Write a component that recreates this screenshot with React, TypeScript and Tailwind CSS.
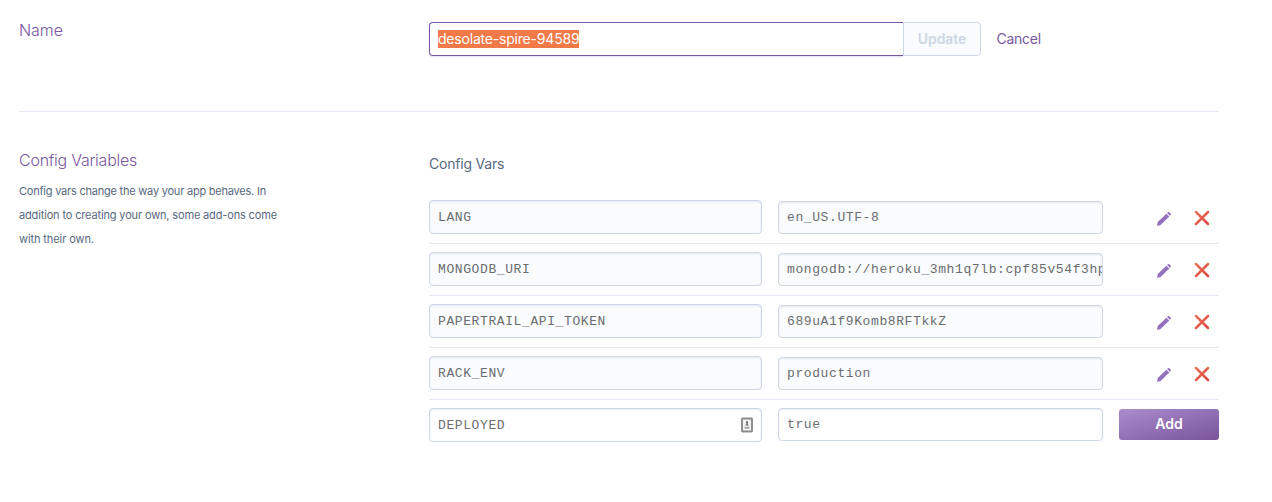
import React from "react";

type ConfigVar = { name: string; value: string };

const configVars: ConfigVar[] = [
  { name: "LANG", value: "en_US.UTF-8" },
  { name: "MONGODB_URI", value: "mongodb://heroku_3mh1q7lb:cpf85v54f3hp" },
  { name: "PAPERTRAIL_API_TOKEN", value: "689uA1f9Komb8RFTkkZ" },
  { name: "RACK_ENV", value: "production" },
];

function PencilIcon() {
  return (
    <svg className="mt-px" width="16" height="16" viewBox="0 0 16 16" fill="#9272bd" aria-hidden="true">
      <path d="M1 15l.7-3.900 8.700-8.400 2.900 2.900-8.700 8.500z" />
      <path d="M11.100 2l.7-.7a1.100 1.100 0 0 1 1.600 0l1.200 1.200a1.100 1.100 0 0 1 0 1.600l-.7.700z" />
    </svg>
  );
}

function CrossIcon() {
  return (
    <svg width="16" height="16" viewBox="0 0 16 16" fill="none" aria-hidden="true">
      <defs>
        <linearGradient id="cross" x1="0" y1="0" x2="16" y2="16" gradientUnits="userSpaceOnUse">
          <stop stopColor="#f0795f" />
          <stop offset="1" stopColor="#d9403f" />
        </linearGradient>
      </defs>
      <path d="M2 2l12 12M14 2L2 14" stroke="url(#cross)" strokeWidth="2.500" strokeLinecap="round" />
    </svg>
  );
}

function AutofillIcon() {
  return (
    <svg width="12" height="16" viewBox="0 0 12 16" fill="none" aria-hidden="true">
      <rect x="1" y="1.500" width="10" height="13" rx="0.500" fill="#f4f4f4" stroke="#8b8b8b" strokeWidth="1.900" />
      <path d="M6 4a1.200 1.200 0 0 1 .8 2V7l1.200 1.500H4L5.200 7V6A1.200 1.200 0 0 1 6 4z" fill="#777" />
      <path d="M3.500 10.700h5" stroke="#aaa" strokeWidth="2" />
    </svg>
  );
}

const field =
  "flex items-center overflow-hidden rounded-[4px] border border-[#cfd7e6] px-2 font-['Liberation_Mono',monospace] text-[13px] leading-[16px] tracking-[0.6px] text-[#6b6d71] whitespace-pre shadow-[inset_0_1px_2px_#e6eaf3]";

export default function App() {
  return (
    <main className="h-[502px] w-[1272px] overflow-hidden bg-white pl-[19px] font-[Inter,sans-serif] text-[#596981]">
      <section className="flex h-[112px] w-[1200px] border-b border-[#e6e8f2] pt-[22px]">
        <h2 className="w-[410px] text-[16px] leading-[16px] font-light tracking-[-0.05px] text-[#79589f]">Name</h2>
        <div className="flex h-[34px] items-stretch">
          <div className="flex w-[474px] items-center rounded-l-[4px] border border-r-0 border-[#79589f] pl-2 shadow-[0_1px_2px_#e4dcef]">
            <span className="h-[18px] bg-[#f17a48] text-[14px] leading-[18px] tracking-[-0.2px] text-white">desolate-spire-94589</span>
          </div>
          <button className="w-[78px] rounded-r-[4px] border border-[#cfd7e6] bg-[#f9fbfd] pb-[2px] text-[14px] font-semibold tracking-[-0.1px] text-[#cfd7e6]">Update</button>
          <button className="ml-[15.5px] pb-[2px] text-[14px] tracking-[-0.25px] text-[#79589f]">Cancel</button>
        </div>
      </section>

      <section className="flex w-[1200px]">
        <div className="w-[410px] pt-[40px]">
          <h2 className="text-[16px] leading-[16px] font-light tracking-[-0.25px] text-[#79589f]">Config Variables</h2>
          <p className="mt-[11px] text-[11px] leading-[24px] tracking-[-0.15px] whitespace-nowrap">
            <span className="tracking-[-0.22px]">Config vars change the way your app behaves. In</span>
            <br />
            addition to creating your own, some add-ons come
            <br />
            <span className="tracking-[-0.1px]">with their own.</span>
          </p>
        </div>
        <div className="w-[790px] pt-[42px]">
          <h3 className="h-[38px] text-[14px] leading-[20px] tracking-[-0.2px]">Config Vars</h3>
          {configVars.map(({ name, value }) => (
            <div key={name} className="flex h-[52px] items-start border-b border-[#e6e8f2] pt-2">
              <div className={`${field} h-[34px] w-[333px] bg-[#f9fbfd] pt-[2px]`}>{name}</div>
              <div className={`${field} mt-px ml-4 h-[33px] w-[325px] bg-[#f9fbfd]`}>{value}</div>
              <div className="mt-[10px] ml-[53px] flex gap-[22px]">
                <PencilIcon />
                <CrossIcon />
              </div>
            </div>
          ))}
          <div className="flex items-start pt-2">
            <div className={`${field} h-[34px] w-[333px] justify-between bg-white`}>
              <span className="pt-[2px]">DEPLOYED</span>
              <AutofillIcon />
            </div>
            <div className={`${field} ml-4 h-[33px] w-[325px] bg-white`}>true</div>
            <button className="mt-px ml-4 h-[31px] w-[100px] rounded-[3px] bg-linear-to-br from-[#ab8dcd] to-[#79559c] pb-[2px] text-[14px] font-semibold text-white">Add</button>
          </div>
        </div>
      </section>
    </main>
  );
}
